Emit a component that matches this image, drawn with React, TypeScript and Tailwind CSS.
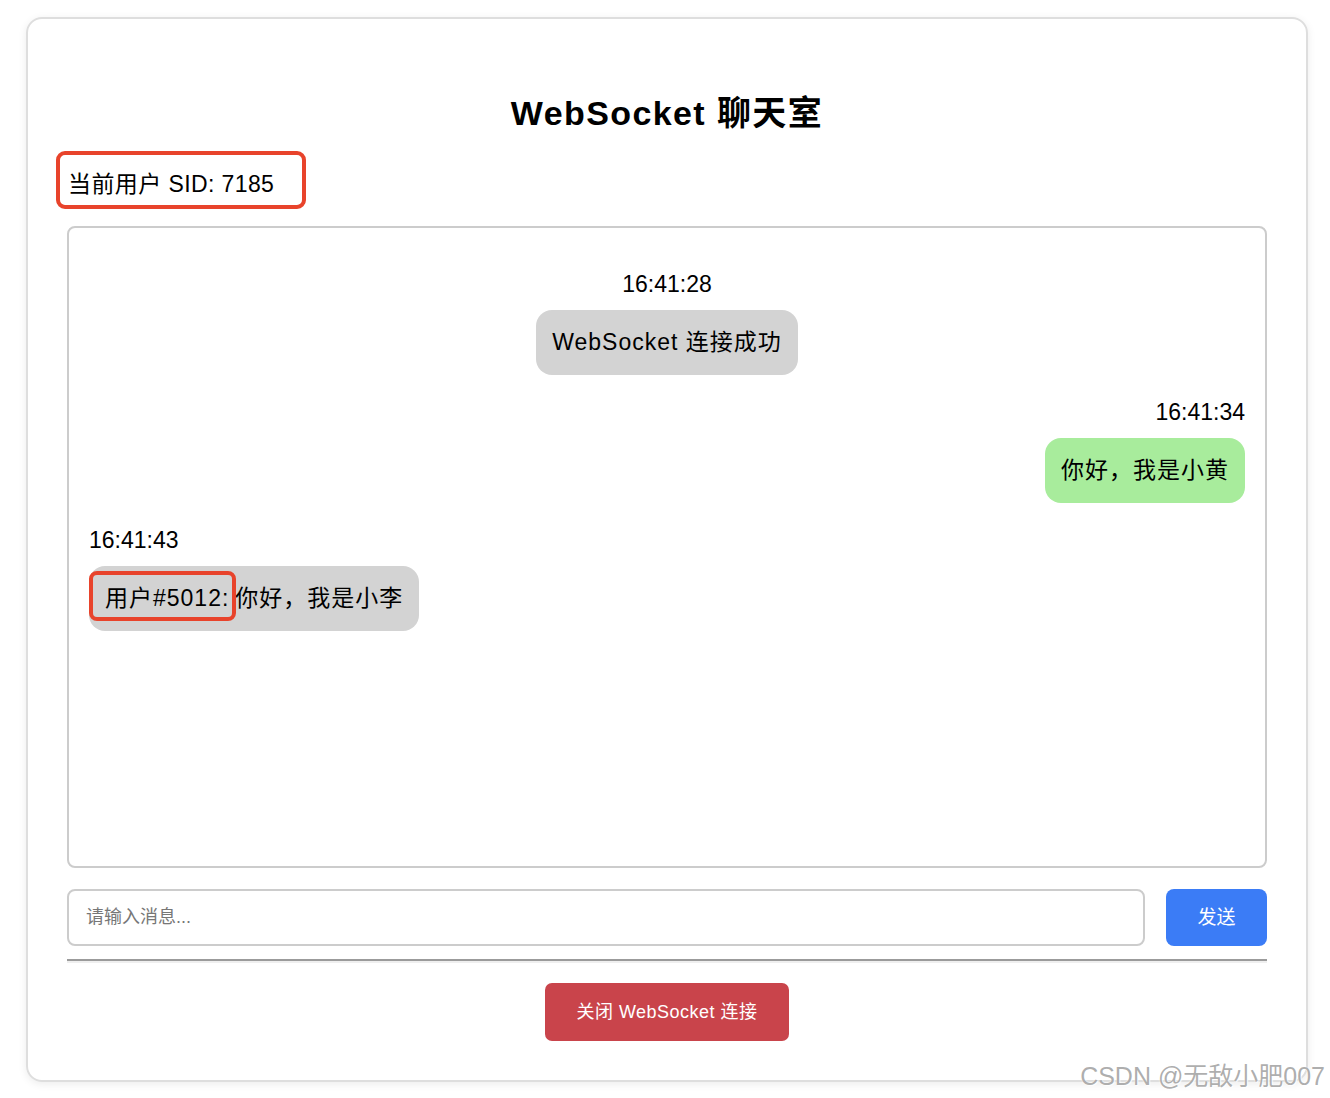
import React from "react";

const FONT = {
  fontFamily:
    '"Liberation Sans", "Noto Sans CJK SC", "Noto Sans", sans-serif',
};

export default function App() {
  return (
    <div className="relative w-[1330px] h-[1098px] bg-white overflow-hidden" style={FONT}>
      <div className="ml-[26px] mt-[17px] w-[1282px] h-[1065px] border-2 border-[#dedede] rounded-[16px] shadow-[0_2px_8px_rgba(0,0,0,0.08)] px-[39px] flex flex-col text-black">
        <h2 className="mt-[74px] text-center text-[34px] leading-[40px] font-bold tracking-[1.4px]">
          WebSocket 聊天室
        </h2>
        <div className="mt-[37px] relative h-[28px] flex items-center">
          <span className="text-[23px] leading-[28px] pl-[1px] tracking-[0.4px]">当前用户 SID: 7185</span>
          <div className="absolute left-[-11px] top-[-19px] w-[250px] h-[58px] border-[4px] border-[#e8432b] rounded-[9px]" />
        </div>
        <div className="mt-[28px] h-[642px] border-2 border-[#cccccc] rounded-[8px] px-[20px] pt-[42px] flex flex-col">
          {/* message 1 - system */}
          <div className="flex flex-col items-center">
            <div className="text-[23px] leading-[28px]">16:41:28</div>
            <div className="mt-[12px] bg-[#d3d3d3] rounded-[16px] px-[16px] py-[16px] text-[23px] leading-[33px] tracking-[1px]">
              WebSocket 连接成功
            </div>
          </div>
          {/* message 2 - self */}
          <div className="mt-[23px] flex flex-col items-end">
            <div className="text-[23px] leading-[28px]">16:41:34</div>
            <div className="mt-[12px] bg-[#a8ec9c] rounded-[16px] px-[16px] py-[16px] text-[23px] leading-[33px] tracking-[1px]">
              你好，我是小黄
            </div>
          </div>
          {/* message 3 - other */}
          <div className="mt-[23px] flex flex-col items-start">
            <div className="text-[23px] leading-[28px]">16:41:43</div>
            <div className="mt-[12px] relative bg-[#d3d3d3] rounded-[16px] px-[16px] py-[16px] text-[23px] leading-[33px] tracking-[1px]">
              <span>用户#5012:</span>
              <span className="ml-[6px]">你好，我是小李</span>
              <div className="absolute left-0 top-[5px] w-[147px] h-[50px] border-[4px] border-[#e8432b] rounded-[8px]" />
            </div>
          </div>
        </div>
        <div className="mt-[21px] flex gap-[21px] h-[57px]">
          <input
            className="flex-1 h-full border-2 border-[#cccccc] rounded-[8px] px-[17px] text-[18px] outline-none placeholder:text-[#777]"
            placeholder="请输入消息..."
            style={FONT}
          />
          <button
            className="w-[101px] h-full bg-[#3b7cf6] text-white rounded-[8px] text-[19px] pt-[2px]"
            style={FONT}
          >
            发送
          </button>
        </div>
        <div className="mt-[13px] border-t-2 border-[#9b9b9b] border-b-2 border-b-[#efefef] h-0" />
        <div className="mt-[20px] flex justify-center">
          <button
            className="w-[244px] h-[58px] bg-[#c9444b] text-white rounded-[7px] text-[18px] tracking-[0.5px]"
            style={FONT}
          >
            关闭 WebSocket 连接
          </button>
        </div>
      </div>
      <div
        className="absolute right-[5px] top-[1059px] text-[25px] leading-[34px] text-[rgba(160,160,160,0.85)]"
        style={{ textShadow: "0 0 2px #fff, 1px 1px 1px rgba(255,255,255,0.9)" }}
      >
        CSDN @无敌小肥007
      </div>
    </div>
  );
}
